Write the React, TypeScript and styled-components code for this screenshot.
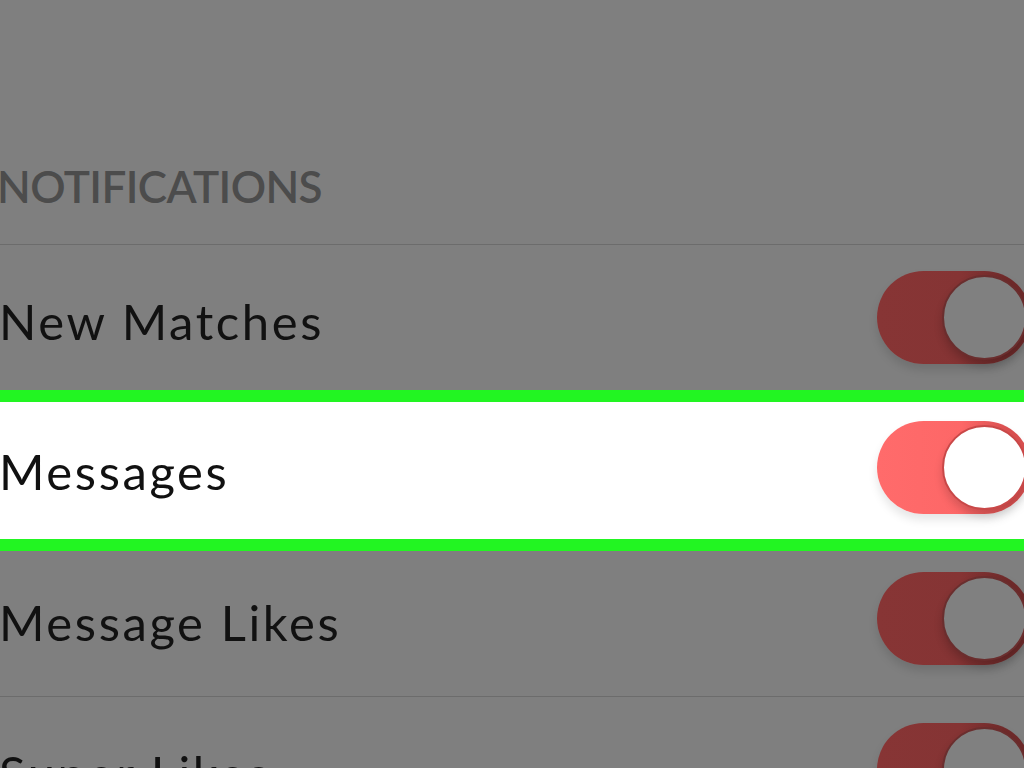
import { createGlobalStyle } from "styled-components";
import styled from "styled-components";

const GlobalStyle = createGlobalStyle`
  html, body {
    margin: 0;
    padding: 0;
    background: #7f7f7f;
  }
  body {
    font-family: Lato, "Noto Sans", "Liberation Sans", sans-serif;
  }
`;

const Screen = styled.div`
  width: 1024px;
  height: 768px;
  overflow: hidden;
  background: #7f7f7f;
`;

const SectionHeader = styled.div`
  height: 244px;
  display: flex;
  align-items: flex-end;
  box-sizing: border-box;
  padding: 0 0 36px 0;
  margin-left: -3px;
  font-size: 44px;
  line-height: 1;
  font-weight: 600;
  letter-spacing: -0.6px;
  color: #4c4c4c;
`;

const List = styled.div`
  border-top: 1px solid #6c6c6c;
  display: flex;
  flex-direction: column;
`;

const Row = styled.div<{ $active?: boolean }>`
  position: relative;
  flex-shrink: 0;
  display: flex;
  align-items: center;
  justify-content: space-between;
  box-sizing: border-box;
  height: ${(p) => (p.$active ? "161px" : "151px")};
  margin: ${(p) => (p.$active ? "-6px 0 -5px" : "0")};
  border-top: ${(p) => (p.$active ? "12px solid #22f522" : "none")};
  border-bottom: ${(p) => (p.$active ? "12px solid #22f522" : "1px solid #6c6c6c")};
  background: ${(p) => (p.$active ? "#ffffff" : "transparent")};
  z-index: ${(p) => (p.$active ? 1 : 0)};
`;

const Label = styled.span`
  font-size: 49px;
  line-height: 1.2;
  letter-spacing: 2.6px;
  color: #111111;
  margin-left: -1px;
  padding-top: 2px;
`;

const Track = styled.div<{ $dim?: boolean }>`
  position: relative;
  flex-shrink: 0;
  width: 154px;
  height: 93px;
  margin-right: -7px;
  margin-bottom: 6px;
  border-radius: 47px;
  background: ${(p) =>
    p.$dim
      ? "linear-gradient(90deg, #873535 0%, #853434 55%, #6e2a2a 85%)"
      : "linear-gradient(90deg, #ff6b6b 0%, #fd6767 55%, #d95050 85%)"};
  box-shadow: ${(p) =>
    p.$dim ? "0 6px 10px rgba(0, 0, 0, 0.12)" : "0 6px 10px rgba(0, 0, 0, 0.1)"};
`;

const Knob = styled.div<{ $dim?: boolean }>`
  position: absolute;
  top: 4px;
  right: 4px;
  width: 85px;
  height: 85px;
  box-sizing: border-box;
  border-radius: 50%;
  background: ${(p) => (p.$dim ? "#808080" : "#ffffff")};
  border: 2px solid ${(p) => (p.$dim ? "#6a2e2e" : "#c94848")};
  box-shadow: ${(p) =>
    p.$dim ? "0 6px 8px rgba(0, 0, 0, 0.18)" : "0 6px 8px rgba(0, 0, 0, 0.15)"};
`;

const rows = [
  { label: "New Matches", active: false },
  { label: "Messages", active: true },
  { label: "Message Likes", active: false },
  { label: "Super Likes", active: false },
];

export default function App() {
  return (
    <Screen>
      <GlobalStyle />
      <SectionHeader>NOTIFICATIONS</SectionHeader>
      <List>
        {rows.map((r) => (
          <Row key={r.label} $active={r.active}>
            <Label>{r.label}</Label>
            <Track $dim={!r.active}>
              <Knob $dim={!r.active} />
            </Track>
          </Row>
        ))}
      </List>
    </Screen>
  );
}
